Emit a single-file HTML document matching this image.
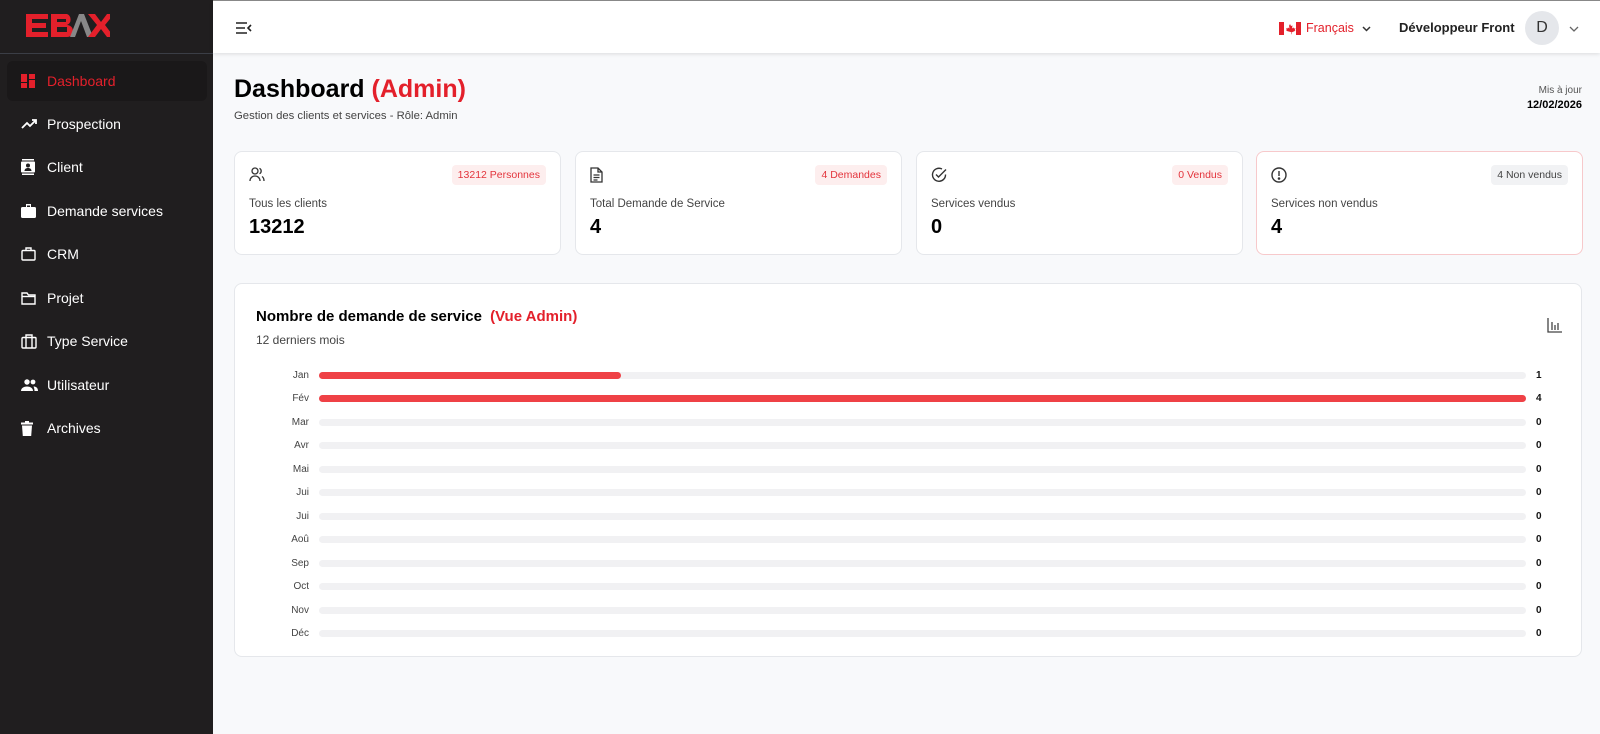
<!DOCTYPE html>
<html><head><meta charset="utf-8"><style>
*{box-sizing:border-box;margin:0;padding:0}
body{width:1600px;height:734px;overflow:hidden;background:#f8f9fb;font-family:"Liberation Sans",sans-serif;position:relative;color:#111}
.side{position:absolute;left:0;top:0;width:213px;height:734px;background:#201e1f}
.logo{height:54px;border-bottom:1px solid #3b3e46;position:relative}
.nav{position:absolute;left:7px;width:200px;height:40px;display:flex;align-items:center;color:#fff;font-size:14px}
.nav svg{position:absolute;left:14px}
.nav span{position:absolute;left:40px}
.active{background:#1a1819;border-radius:6px;color:#e3202b}
.head{position:absolute;left:213px;top:0;right:0;height:53px;background:#fff;border-top:1px solid #888;box-shadow:0 1px 4px rgba(0,0,0,.12)}
.card{position:absolute;top:151px;width:327px;height:104px;background:#fff;border:1px solid #e5e7eb;border-radius:8px}
.card .ic{position:absolute;left:14px;top:15px}
.badge{position:absolute;right:14px;top:13px;height:20px;padding:0 6px;font-size:10.5px;line-height:20px;border-radius:4px;background:#fdeeee;color:#e3343c}
.card .lbl{position:absolute;left:14px;top:46px;font-size:11.5px;color:#444}
.card .val{position:absolute;left:14px;top:64px;font-size:20px;font-weight:bold;color:#000}
.chart{position:absolute;left:234px;top:283px;width:1348px;height:374px;background:#fff;border:1px solid #e5e7eb;border-radius:8px}
.row{position:absolute;left:0;width:1346px;height:14px}
.row .m{position:absolute;left:0;width:74px;text-align:right;top:1px;font-size:10px;color:#444;line-height:14px}
.row .t{position:absolute;left:84px;top:4px;width:1207px;height:7px;background:#f1f1f3;border-radius:4px}
.row .f{height:7px;background:#ef4146;border-radius:4px}
.row .v{position:absolute;left:1301px;top:1px;font-size:10px;font-weight:bold;line-height:14px}
</style></head><body>
<div class="side">
 <div class="logo">
  <svg width="84" height="28" viewBox="0 0 84 28" style="position:absolute;left:26px;top:12px">
   <path d="M0 2h22v5H6v4h14v5H6v4h16v5H0z" fill="#e3202b"/>
   <path d="M25 2h16a6 6 0 0 1 0 11a6 6 0 0 1 0 12H25z M31 7v3h9v-3z M31 15v5h10v-5z" fill="#e3202b" fill-rule="evenodd"/>
   <path d="M44 25l9-23h5l9 23h-6l-6-16-6 16z" fill="#888"/>
   <path d="M62 2h7l6 8 6-8h7l-9 11 9 12h-7l-6-8-6 8h-7l9-12z" fill="#e3202b"/>
  </svg>
 </div>
 <div class="nav active" style="top:61px"><svg width="14" height="14" viewBox="0 0 14 14" fill="#e3202b"><rect x="0" y="0" width="6" height="8"/><rect x="0" y="9" width="6" height="5"/><rect x="8" y="0" width="6" height="5"/><rect x="8" y="6" width="6" height="8"/></svg><span>Dashboard</span></div>
 <div class="nav" style="top:104px"><svg width="16" height="12" viewBox="0 0 16 12" fill="none" stroke="#fff" stroke-width="1.8"><path d="M1 10l5-5 3 3 6-6M11 2h4v4"/></svg><span>Prospection</span></div>
 <div class="nav" style="top:147px"><svg width="14" height="16" viewBox="0 0 14 16" fill="#fff"><rect x="1" y="0" width="12" height="1.5"/><rect x="0" y="2.5" width="14" height="11" rx="1"/><rect x="1" y="14.5" width="12" height="1.5"/><circle cx="7" cy="6.5" r="2" fill="#201e1f"/><path d="M3.5 12c0-2 1.5-3 3.5-3s3.5 1 3.5 3z" fill="#201e1f"/></svg><span>Client</span></div>
 <div class="nav" style="top:191px"><svg width="15" height="14" viewBox="0 0 15 14" fill="#fff"><path d="M5 0h5v3H9V1.5H6V3H5z"/><rect x="0" y="3" width="15" height="11" rx="1.5"/></svg><span>Demande services</span></div>
 <div class="nav" style="top:234px"><svg width="15" height="14" viewBox="0 0 15 14" fill="none" stroke="#fff" stroke-width="1.4"><path d="M5 3V1h5v2"/><rect x="1" y="3.5" width="13" height="9.5" rx="1"/></svg><span>CRM</span></div>
 <div class="nav" style="top:278px"><svg width="15" height="13" viewBox="0 0 15 13" fill="none" stroke="#fff" stroke-width="1.4"><path d="M1 1h5l1.5 2H14v9H1z"/><path d="M1 4.5h13"/></svg><span>Projet</span></div>
 <div class="nav" style="top:321px"><svg width="16" height="15" viewBox="0 0 16 15" fill="none" stroke="#fff" stroke-width="1.4"><path d="M5 3V1h6v2"/><rect x="1" y="3.5" width="14" height="10.5" rx="1"/><path d="M5 3.5v10.5M11 3.5v10.5"/></svg><span>Type Service</span></div>
 <div class="nav" style="top:365px"><svg width="17" height="12" viewBox="0 0 17 12" fill="#fff"><circle cx="6" cy="3" r="2.7"/><circle cx="12" cy="3" r="2.4"/><path d="M0 12c0-3 3-4.5 6-4.5s6 1.5 6 4.5z"/><path d="M12.5 7.5c2.5 0 4.5 1.3 4.5 4.5h-3.5c0-2-.5-3.2-1-4.5z"/></svg><span>Utilisateur</span></div>
 <div class="nav" style="top:408px"><svg width="12" height="15" viewBox="0 0 12 15" fill="#fff"><rect x="0" y="1.5" width="12" height="2"/><rect x="4" y="0" width="4" height="2"/><path d="M1 4.5h10l-.8 10.5H1.8z"/></svg><span>Archives</span></div>
</div>

<div class="head">
 <svg width="16" height="12" viewBox="0 0 16 12" style="position:absolute;left:23px;top:21px" fill="none" stroke="#222" stroke-width="1.6"><path d="M0 1h11M0 6h9M0 11h11M15 3l-3 3 3 3"/></svg>
 <svg width="22" height="13" viewBox="0 0 22 13" style="position:absolute;left:1066px;top:21px"><rect width="22" height="13" fill="#fff"/><rect width="5" height="13" fill="#e3202b"/><rect x="17" width="5" height="13" fill="#e3202b"/><path d="M11 2l1 2 1.5-.5-.5 3 1.5-1 .5 1 1.5-.3-.8 2 .8.5-3.5 1.5v2h-.5v-2L7 8.7l.8-.5-.8-2 1.5.3.5-1 1.5 1-.5-3L10 4z" fill="#e3202b"/></svg>
 <div style="position:absolute;left:1093px;top:20px;font-size:12.5px;color:#e3202b">Français</div>
 <svg width="9" height="6" viewBox="0 0 9 6" style="position:absolute;left:1149px;top:25px" fill="none" stroke="#333" stroke-width="1.5"><path d="M1 1l3.5 3.5L8 1"/></svg>
 <div style="position:absolute;left:1186px;top:19px;font-size:13px;font-weight:bold;color:#222">Développeur Front</div>
 <div style="position:absolute;left:1312px;top:10px;width:34px;height:34px;border-radius:50%;background:#e5e7eb;color:#333;font-size:16px;text-align:center;line-height:34px">D</div>
 <svg width="10" height="6" viewBox="0 0 10 6" style="position:absolute;left:1356px;top:25px" fill="none" stroke="#666" stroke-width="1.3"><path d="M1 1l4 4 4-4"/></svg>
</div>

<div style="position:absolute;left:234px;top:75px;font-size:25px;font-weight:bold;color:#000">Dashboard <span style="color:#e3202b">(Admin)</span></div>
<div style="position:absolute;left:234px;top:110px;font-size:11.3px;color:#444">Gestion des clients et services - Rôle: Admin</div>
<div style="position:absolute;right:18px;top:85px;font-size:10px;color:#555;text-align:right">Mis à jour</div>
<div style="position:absolute;right:18px;top:99px;font-size:11px;font-weight:bold;color:#000;text-align:right">12/02/2026</div>

<div class="card" style="left:234px">
 <svg class="ic" width="16" height="15" viewBox="0 0 16 15" fill="none" stroke="#333" stroke-width="1.3"><circle cx="6" cy="4" r="3"/><path d="M1 14c0-3 2.2-5 5-5s5 2 5 5M10.5 1.3a3 3 0 0 1 0 5.4M13 9.5c1.3.8 2 2.5 2 4.5"/></svg>
 <div class="badge">13212 Personnes</div><div class="lbl">Tous les clients</div><div class="val">13212</div></div>
<div class="card" style="left:575px">
 <svg class="ic" width="13" height="16" viewBox="0 0 13 16" fill="none" stroke="#333" stroke-width="1.3"><path d="M1 1h7l4 4v10H1z M8 1v4h4 M3.5 8h6M3.5 10.5h6M3.5 13h4"/></svg>
 <div class="badge">4 Demandes</div><div class="lbl">Total Demande de Service</div><div class="val">4</div></div>
<div class="card" style="left:916px">
 <svg class="ic" width="16" height="16" viewBox="0 0 16 16" fill="none" stroke="#333" stroke-width="1.4"><path d="M14.5 7.5A6.5 6.5 0 1 1 11 2"/><path d="M5 7.5l2.5 2.5L15 2.5"/></svg>
 <div class="badge">0 Vendus</div><div class="lbl">Services vendus</div><div class="val">0</div></div>
<div class="card" style="left:1256px;border-color:#f7c9cb">
 <svg class="ic" width="16" height="16" viewBox="0 0 16 16" fill="none" stroke="#333" stroke-width="1.4"><circle cx="8" cy="8" r="7"/><path d="M8 4v5"/><circle cx="8" cy="11.5" r=".6" fill="#333"/></svg>
 <div class="badge" style="background:#f1f2f4;color:#444">4 Non vendus</div><div class="lbl">Services non vendus</div><div class="val">4</div></div>

<div class="chart">
 <div style="position:absolute;left:21px;top:24px;font-size:15px;font-weight:bold;color:#000">Nombre de demande de service <span style="color:#e3202b;margin-left:4px">(Vue Admin)</span></div>
 <div style="position:absolute;left:21px;top:49px;font-size:12px;color:#444">12 derniers mois</div>
 <svg width="15" height="15" viewBox="0 0 15 15" style="position:absolute;left:1312px;top:34px" fill="none" stroke="#444" stroke-width="1.3"><path d="M1 0v14h14M5 4v8M8 7v5M11 5v7"/></svg>
 <div class="row" style="top:84px"><div class="m">Jan</div><div class="t"><div class="f" style="width:25%"></div></div><div class="v">1</div></div>
 <div class="row" style="top:107px"><div class="m">Fév</div><div class="t"><div class="f" style="width:100%"></div></div><div class="v">4</div></div>
 <div class="row" style="top:131px"><div class="m">Mar</div><div class="t"></div><div class="v">0</div></div>
 <div class="row" style="top:154px"><div class="m">Avr</div><div class="t"></div><div class="v">0</div></div>
 <div class="row" style="top:178px"><div class="m">Mai</div><div class="t"></div><div class="v">0</div></div>
 <div class="row" style="top:201px"><div class="m">Jui</div><div class="t"></div><div class="v">0</div></div>
 <div class="row" style="top:225px"><div class="m">Jui</div><div class="t"></div><div class="v">0</div></div>
 <div class="row" style="top:248px"><div class="m">Aoû</div><div class="t"></div><div class="v">0</div></div>
 <div class="row" style="top:272px"><div class="m">Sep</div><div class="t"></div><div class="v">0</div></div>
 <div class="row" style="top:295px"><div class="m">Oct</div><div class="t"></div><div class="v">0</div></div>
 <div class="row" style="top:319px"><div class="m">Nov</div><div class="t"></div><div class="v">0</div></div>
 <div class="row" style="top:342px"><div class="m">Déc</div><div class="t"></div><div class="v">0</div></div>
</div>
</body></html>
